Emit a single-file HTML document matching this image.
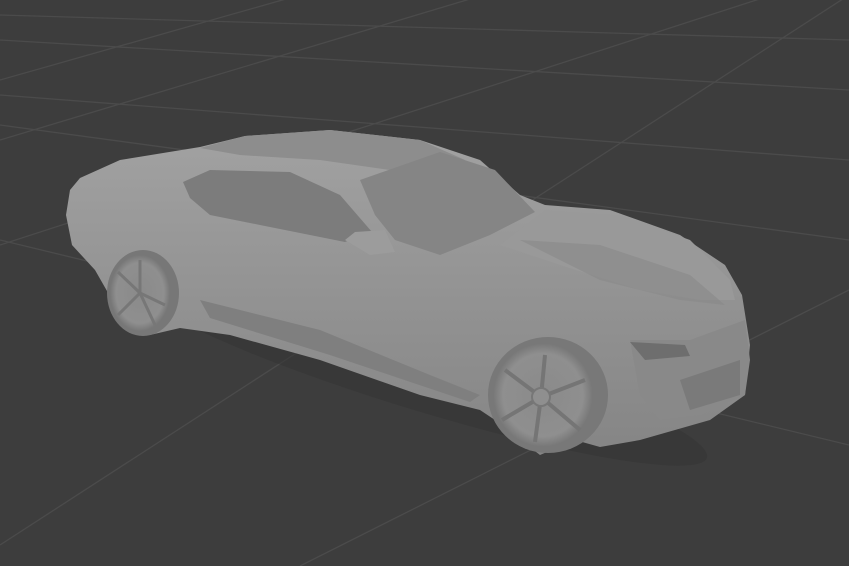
<!DOCTYPE html>
<html><head><style>
html,body{margin:0;padding:0;background:#3d3d3d;width:849px;height:566px;overflow:hidden}
svg{display:block}
</style></head><body>
<svg width="849" height="566" viewBox="0 0 849 566" xmlns="http://www.w3.org/2000/svg">
<defs>
<linearGradient id="body" x1="0" y1="0" x2="0" y2="1">
<stop offset="0" stop-color="#a2a2a2"/><stop offset="0.5" stop-color="#939393"/><stop offset="1" stop-color="#858585"/>
</linearGradient>
<radialGradient id="wh" cx="0.5" cy="0.5" r="0.5">
<stop offset="0" stop-color="#8a8a8a"/><stop offset="0.8" stop-color="#8f8f8f"/><stop offset="1" stop-color="#777"/>
</radialGradient>
</defs>
<rect width="849" height="566" fill="#3d3d3d"/>
<g stroke="#4b4b4b" stroke-width="1.3" fill="none">
<line x1="0" y1="545" x2="849" y2="-5"/>
<line x1="0" y1="245" x2="849" y2="-30"/>
<line x1="0" y1="140" x2="500" y2="-10"/>
<line x1="0" y1="80" x2="300" y2="-5"/>
<line x1="300" y1="566" x2="849" y2="290"/>
<line x1="0" y1="40" x2="849" y2="90"/>
<line x1="0" y1="95" x2="849" y2="160"/>
<line x1="0" y1="125" x2="849" y2="240"/>
<line x1="0" y1="240" x2="849" y2="445"/>
<line x1="0" y1="15" x2="849" y2="40"/>
</g>
<!-- shadow -->
<ellipse cx="420" cy="370" rx="300" ry="40" fill="#363636" opacity="0.6" transform="rotate(17 420 370)"/>
<!-- body -->
<path d="M70,190 L80,178 L120,160 L200,147 L245,136 L330,130 L420,140 L480,160 L520,195 L545,205 L610,210 L680,235 L725,265 L742,295 L750,345 L745,395 L710,420 L640,440 L600,447 L575,440 L540,455 L495,420 L480,410 L420,395 L320,360 L230,335 L180,328 L150,335 L115,305 L95,270 L72,245 L66,215 Z" fill="url(#body)"/>
<path d="M200,148 L245,136 L330,130 L420,140 L465,160 L390,170 L320,160 L240,155 Z" fill="#8d8d8d"/>
<path d="M183,182 L210,170 L290,172 L340,195 L372,232 L345,242 L260,225 L210,215 L190,198 Z" fill="#7c7c7c"/>
<path d="M360,180 L440,152 L495,170 L535,212 L490,235 L440,255 L395,240 L375,215 Z" fill="#858585"/>
<path d="M545,210 L620,215 L690,240 L730,280 L735,300 L700,300 L640,290 L560,265 L500,245 Z" fill="#999"/>
<path d="M520,240 L600,245 L690,275 L725,305 L680,300 L600,280 Z" fill="#8a8a8a" opacity="0.7"/>
<path d="M200,300 L320,330 L430,375 L480,395 L470,402 L330,355 L210,318 Z" fill="#7f7f7f"/>
<path d="M630,340 L690,340 L745,320 L750,360 L745,395 L700,415 L660,420 L640,395 Z" fill="#898989"/>
<path d="M630,342 L685,345 L690,356 L645,360 Z" fill="#6e6e6e"/>
<path d="M680,380 L740,360 L740,395 L690,410 Z" fill="#7a7a7a"/>
<path d="M345,240 L355,232 L385,230 L395,252 L370,255 Z" fill="#9c9c9c"/>
<ellipse cx="143" cy="293" rx="36" ry="43" fill="#777"/>
<ellipse cx="140" cy="293" rx="30" ry="38" fill="url(#wh)"/>
<g stroke="#777" stroke-width="3"><line x1="140" y1="293" x2="140" y2="260"/><line x1="140" y1="293" x2="165" y2="305"/><line x1="140" y1="293" x2="118" y2="315"/><line x1="140" y1="293" x2="118" y2="272"/><line x1="140" y1="293" x2="155" y2="325"/></g>
<ellipse cx="548" cy="395" rx="60" ry="58" fill="#787878"/>
<ellipse cx="543" cy="395" rx="50" ry="52" fill="url(#wh)"/>
<g stroke="#757575" stroke-width="4"><line x1="541" y1="397" x2="545" y2="355"/><line x1="541" y1="397" x2="585" y2="380"/><line x1="541" y1="397" x2="580" y2="430"/><line x1="541" y1="397" x2="535" y2="442"/><line x1="541" y1="397" x2="502" y2="420"/><line x1="541" y1="397" x2="505" y2="370"/></g>
<circle cx="541" cy="397" r="9" fill="#8f8f8f" stroke="#777" stroke-width="2"/>
</svg>
</body></html>
